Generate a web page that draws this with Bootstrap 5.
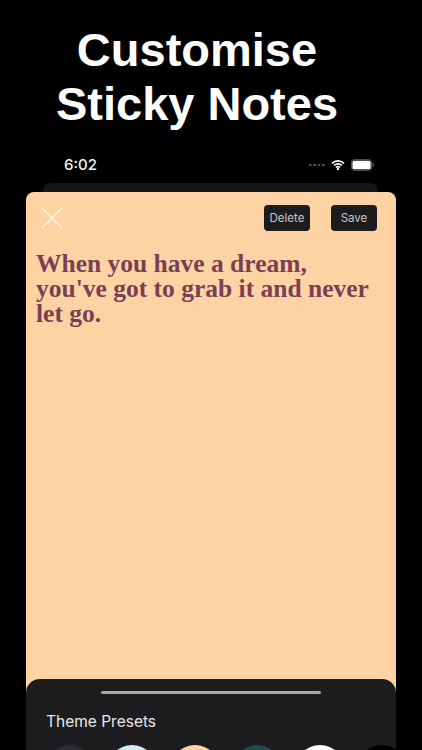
<!DOCTYPE html>
<html lang="en">
<head>
<meta charset="utf-8">
<meta name="viewport" content="width=device-width, initial-scale=1">
<link rel="stylesheet" href="https://cdn.jsdelivr.net/npm/bootstrap@5.3.0/dist/css/bootstrap.min.css">
<style>
html, body { height: 750px; overflow: hidden; background: #000; }
.shot { width: 422px; height: 750px; overflow: hidden; background: #000; }
.headline { height: 146px; padding: 23px 28px 0 0; font: 700 47px/54px "Liberation Sans", sans-serif; color: #fff; }
.statusbar { height: 37px; padding: 0 48px 0 64px; font: 500 15px/18px Inter, sans-serif; color: #f2f2f2; }
.signal { width: 17px; height: 2px; margin-right: 6px; background-image: radial-gradient(circle, #555 1px, transparent 1.1px); background-size: 4.4px 2px; }
.wifi { margin-right: 6px; }
.backsheet { height: 9px; margin: 0 44px 0 43px; background: #151518; border-radius: 8px 8px 0 0; }
.notepaper { height: 560px; margin: 0 26px; padding: 13px 19px 0 10px; background: #fed3a3; border-radius: 8px 8px 0 0; position: relative; }
.closebtn { width: 22px; height: 22px; margin: 2px 0 0 5px; }
.btnrow { gap: 21px; }
.notebtn { width: 46px; height: 26px; padding: 0; font: 400 11.5px/26px Inter, sans-serif; color: #c8c8c8; background: #1c1c1e; border: 0; border-radius: 4px; }
.notebtn:hover { color: #c8c8c8; background: #1c1c1e; }
.notetext { margin: 20px 0 0; font: 700 25.5px/25px "Liberation Serif", serif; color: #7a3f54; white-space: nowrap; }
.sheet { position: absolute; left: 0; right: 0; top: 487px; height: 80px; background: #1c1c1e; border-radius: 14px 14px 0 0; }
.grabber { width: 220px; height: 3px; margin: 12px auto 0; background: #a6a6a6; border-radius: 2px; }
.sheettitle { margin: 18px 0 0 20px; font: 400 15.5px/20px Inter, sans-serif; color: #e8e8e8; }
.swatches { position: absolute; left: 19px; top: 66px; width: 380px; gap: 12.4px; }
.swatch { flex: none; width: 50px; height: 50px; border-radius: 50%; }
</style>
</head>
<body>
<div class="shot">
  <div class="headline text-center">Customise<br>Sticky Notes</div>
  <div class="statusbar d-flex justify-content-between align-items-center">
    <span>6:02</span>
    <span class="d-flex align-items-center">
      <span class="signal"></span>
      <svg class="wifi" width="14" height="12" viewBox="0 0 15 12"><path d="M1 4.2a9.3 9.3 0 0 1 13 0M3.2 6.6a6.1 6.1 0 0 1 8.6 0M5.3 8.7a3.1 3.1 0 0 1 4.4 0" fill="none" stroke="#fff" stroke-width="1.7"/><circle cx="7.5" cy="10.4" r="1.3" fill="#fff"/></svg>
      <svg width="23" height="12" viewBox="0 0 24 12"><rect x=".5" y=".5" width="21" height="11" rx="3" fill="none" stroke="#666"/><rect x="1.5" y="1.5" width="19" height="9" rx="2" fill="#fff"/><rect x="22.5" y="4" width="1.2" height="4" rx=".6" fill="#666"/></svg>
    </span>
  </div>
  <div class="backsheet"></div>
  <div class="notepaper">
    <div class="d-flex justify-content-between align-items-start">
      <svg class="closebtn" viewBox="0 0 22 22"><path d="M1 1l20 20M21 1L1 21" stroke="#fff7ec" stroke-width="1.1" fill="none"/></svg>
      <div class="btnrow d-flex">
        <button type="button" class="btn notebtn">Delete</button>
        <button type="button" class="btn notebtn">Save</button>
      </div>
    </div>
    <p class="notetext">When you have a dream,<br>you've got to grab it and never<br>let go.</p>
    <div class="sheet">
      <div class="grabber"></div>
      <div class="sheettitle">Theme Presets</div>
      <div class="swatches d-flex">
        <div class="swatch" style="background:#2b2b33"></div>
        <div class="swatch" style="background:#d3ebf1"></div>
        <div class="swatch" style="background:#fed3a3"></div>
        <div class="swatch" style="background:#1f4d4a"></div>
        <div class="swatch" style="background:#fff"></div>
        <div class="swatch" style="background:#000"></div>
      </div>
    </div>
  </div>
</div>
<script src="https://cdn.jsdelivr.net/npm/bootstrap@5.3.0/dist/js/bootstrap.bundle.min.js"></script>
</body>
</html>
